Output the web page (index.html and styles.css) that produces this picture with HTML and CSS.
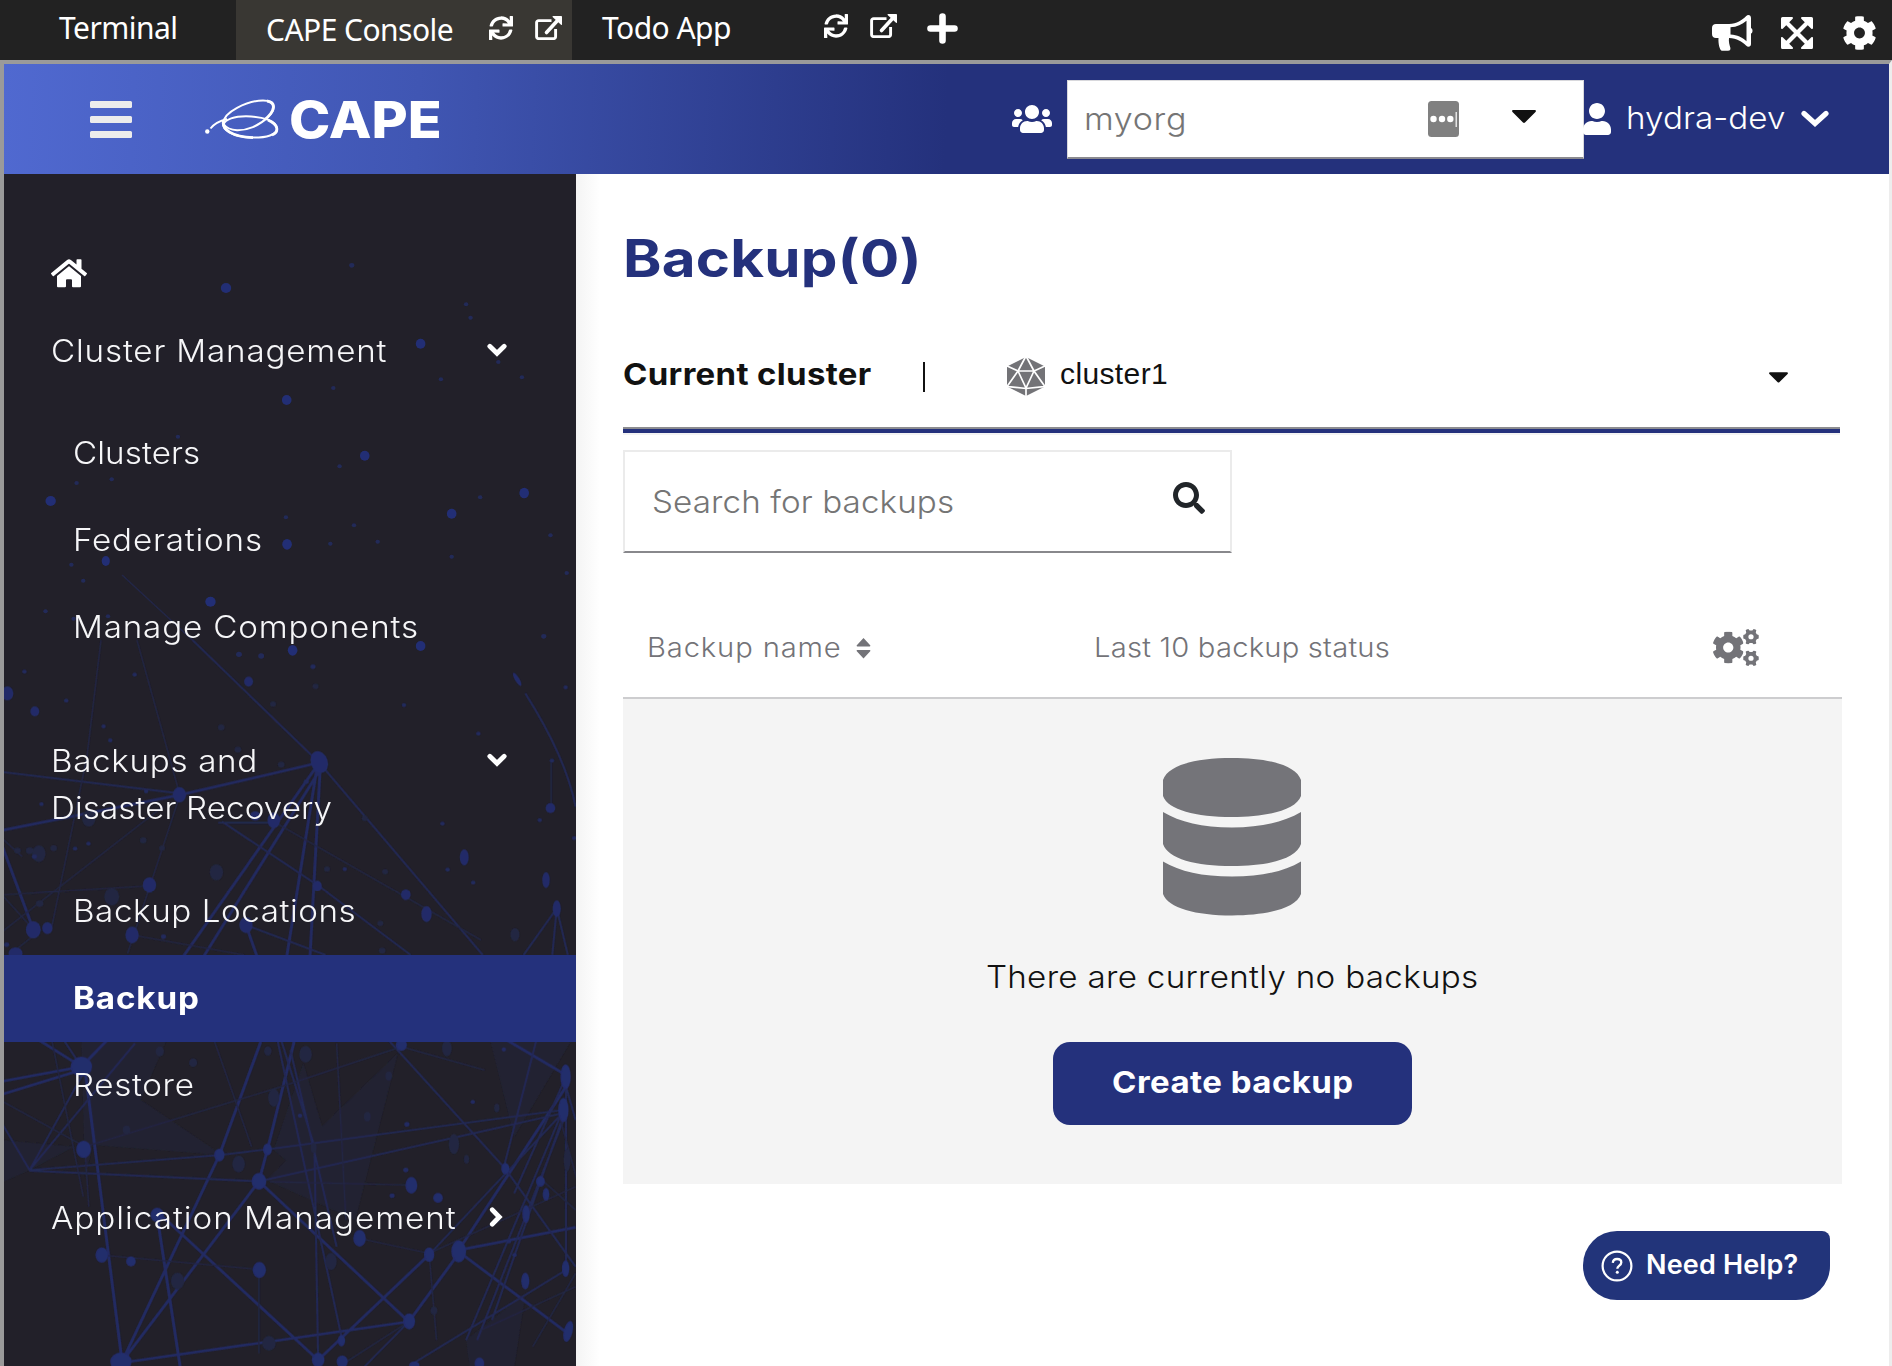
FILE: index.html
```html
<!DOCTYPE html>
<html lang="en">
<head>
<meta charset="utf-8">
<title>CAPE Console</title>
<link rel="stylesheet" href="styles.css">
</head>
<body>
<svg class="defs" aria-hidden="true">
  <symbol id="sync" viewBox="0 0 512 512"><path d="M440.65 12.57l4 82.77A247.16 247.16 0 0 0 255.83 8C134.73 8 33.91 94.92 12.29 209.82A12 12 0 0 0 24.09 224h49.05a12 12 0 0 0 11.67-9.26 175.91 175.91 0 0 1 317-56.94l-101.46-4.86a12 12 0 0 0-12.57 12v47.41a12 12 0 0 0 12 12H500a12 12 0 0 0 12-12V12a12 12 0 0 0-12-12h-47.37a12 12 0 0 0-11.98 12.57zM255.83 432a175.61 175.61 0 0 1-146-77.8l101.8 4.87a12 12 0 0 0 12.57-12v-47.4a12 12 0 0 0-12-12H12a12 12 0 0 0-12 12V500a12 12 0 0 0 12 12h47.35a12 12 0 0 0 12-12.6l-4.15-82.57A247.17 247.17 0 0 0 255.83 504c121.11 0 221.93-86.92 243.55-201.82a12 12 0 0 0-11.8-14.18h-49.05a12 12 0 0 0-11.67 9.26A175.86 175.86 0 0 1 255.83 432z"/></symbol>
  <symbol id="external" viewBox="0 0 27 24"><path d="M16.5 4.6H3.6a2 2 0 0 0-2 2v14a2 2 0 0 0 2 2h15a2 2 0 0 0 2-2V13" fill="none" stroke="currentColor" stroke-width="2.9"/><path d="M11.5 16.5L23 4" stroke="currentColor" stroke-width="3.6" stroke-linecap="round"/><path d="M18 0h8.2a.8.8 0 0 1 .8.8V8.400a.6.6 0 0 1-1 .4L17.600 1a.6.6 0 0 1 .4-1z"/></symbol>
  <symbol id="cog" viewBox="18 6 476 500"><path d="M487.4 315.7l-42.6-24.6c4.3-23.2 4.3-47 0-70.2l42.6-24.6c4.9-2.8 7.1-8.6 5.5-14-11.1-35.6-30-67.8-54.7-94.6-3.8-4.1-10-5.1-14.8-2.3L380.8 110c-17.900-15.400-38.500-27.300-60.800-35.100V25.800c0-5.600-3.900-10.500-9.400-11.700-36.700-8.200-74.300-7.800-109.200 0-5.500 1.200-9.400 6.100-9.400 11.700V75c-22.200 7.900-42.800 19.800-60.800 35.100L88.700 85.500c-4.900-2.800-11-1.900-14.800 2.300-24.700 26.700-43.600 58.900-54.700 94.600-1.700 5.400.6 11.200 5.500 14L67.300 221c-4.300 23.200-4.300 47 0 70.200l-42.600 24.600c-4.900 2.800-7.100 8.600-5.500 14 11.100 35.600 30 67.800 54.700 94.600 3.800 4.100 10 5.100 14.800 2.300l42.600-24.600c17.900 15.400 38.500 27.300 60.800 35.100v49.200c0 5.600 3.900 10.500 9.400 11.700 36.700 8.200 74.300 7.800 109.200 0 5.500-1.200 9.400-6.100 9.400-11.700v-49.200c22.200-7.900 42.800-19.800 60.800-35.100l42.600 24.600c4.900 2.800 11 1.900 14.800-2.300 24.700-26.700 43.600-58.900 54.700-94.600 1.500-5.500-.7-11.300-5.600-14.100zM256 336c-44.100 0-80-35.900-80-80s35.900-80 80-80 80 35.900 80 80-35.900 80-80 80z"/></symbol>
  <symbol id="cog-small" viewBox="0 0 16 16"><path fill-rule="evenodd" d="M3.500.6l1.800-.6 1.300 1.600h2.800L10.700 0l1.800.6 1 .8-.6 2.200 1 1.900 2 .6.100 1.900-.1 1.900-2 .6-1 1.900.6 2.200-1 .8-1.800.6-1.300-1.600H6.600L5.300 16l-1.800-.6-1-.8.600-2.200-1-1.900-2-.6L0 8l.1-1.900 2-.6 1-1.900-.6-2.200zM8 5.300a2.700 2.700 0 1 0 0 5.400 2.700 2.700 0 0 0 0-5.400z"/></symbol>
  <symbol id="chev" viewBox="0 0 28 17"><path d="M3 3.500l11 10 11-10" fill="none" stroke="currentColor" stroke-width="5.200" stroke-linecap="round" stroke-linejoin="miter"/></symbol>
  <symbol id="chev-bold" viewBox="0 0 20 14"><path d="M2.800 3.300l7.200 7 7.200-7" fill="none" stroke="currentColor" stroke-width="4.800" stroke-linecap="round" stroke-linejoin="miter"/></symbol>
</svg>

<header class="tabs">
  <div class="tab tab-terminal"><span>Terminal</span></div>
  <div class="tab tab-active"><span>CAPE Console</span>
    <svg class="i-sync"><use href="#sync"/></svg><svg class="i-ext"><use href="#external"/></svg></div>
  <div class="tab tab-todo"><span>Todo App</span>
    <svg class="i-sync"><use href="#sync"/></svg><svg class="i-ext"><use href="#external"/></svg></div>
  <svg class="i-plus" viewBox="0 0 31 31"><path d="M15.500 3.500v24M3.500 15.500h24" stroke="currentColor" stroke-width="6.600" stroke-linecap="round"/></svg>
  <div class="tools">
    <svg class="i-horn" viewBox="0 0 41 36"><path fill-rule="evenodd" d="M4 9h13c8 0 13-4 17-7.700C36-.8 39 0 39 3v10c2 .6 2 5 0 5.600V29c0 3-3 3.500-5 1.500-4-4-9-7-17-7.500-.5 4 .5 7 1.300 9.500.5 2-.3 3.300-2.300 3.300H10C8 35.800 6 29 6.500 23H4c-2.500 0-4-1.500-4-4v-6c0-2.500 1.500-4 4-4zM18.500 12.300v7.300c7 .4 11.500 3 16 6.600V5.800c-4.500 3.800-9.500 6.200-16 6.500z"/></svg>
    <svg class="i-expand" viewBox="0 0 32 32"><path d="M5 5l22 22M27 5L5 27" stroke="currentColor" stroke-width="4.200"/><path d="M1.500 0h9.500a1 1 0 0 1 .7 1.700L1.700 11.700A1 1 0 0 1 0 11V1.500A1.500 1.500 0 0 1 1.500 0zM30.500 0H21a1 1 0 0 0-.7 1.700l10 10A1 1 0 0 0 32 11V1.500A1.500 1.500 0 0 0 30.500 0zM1.500 32h9.500a1 1 0 0 0 .7-1.700l-10-10A1 1 0 0 0 0 21v9.500A1.500 1.500 0 0 0 1.500 32zM30.500 32H21a1 1 0 0 1-.7-1.700l10-10A1 1 0 0 1 32 21v9.500a1.500 1.500 0 0 1-1.500 1.500z"/></svg>
    <svg class="i-cog"><use href="#cog"/></svg>
  </div>
</header>

<div class="frame">
  <div class="appbar">
    <div class="menu"><i></i><i></i><i></i></div>
    <svg class="logo" viewBox="0 0 74 40"><path d="M5.500 29.500C9 25 14 22 22 20" stroke-width="1.900"/><path d="M18.500 26C16 13 44 1.500 58 1.400 71 1.500 71.500 10 63 18 54 27 42 31.500 32 31.300 26 31 21 28.500 18.500 25" stroke-width="2"/><path d="M18.200 26C20 20 30 17.300 41 17.300 58 17.500 71.800 22 72 29.500 72 36 61 38.600 49 38.600 32 38.500 19 33 18.200 26" stroke-width="2"/><path d="M18.500 22C16.500 30 27 38 48 38.600M62 2C71.500 3.500 70 12 60 20.500M63 21C74 26 74 33 67 36" stroke-width="2.800"/><circle cx="2.300" cy="32.500" r="2.200" fill="#fff" stroke="none"/></svg>
    <strong class="brand">CAPE</strong>
    <svg class="i-users" viewBox="0 32 640 448"><path d="M96 224c35.300 0 64-28.700 64-64s-28.700-64-64-64-64 28.700-64 64 28.700 64 64 64zm448 0c35.300 0 64-28.700 64-64s-28.700-64-64-64-64 28.700-64 64 28.700 64 64 64zm32 32h-64c-17.600 0-33.500 7.100-45.100 18.600 40.300 22.100 68.900 62 75.100 109.400h66c17.700 0 32-14.300 32-32v-32c0-35.300-28.700-64-64-64zm-256 0c61.900 0 112-50.100 112-112S381.900 32 320 32 208 82.100 208 144s50.100 112 112 112zm76.800 32h-8.300c-20.800 10-43.900 16-68.500 16s-47.600-6-68.500-16h-8.300C179.600 288 128 339.600 128 403.200V432c0 26.500 21.500 48 48 48h288c26.500 0 48-21.500 48-48v-28.800c0-63.600-51.600-115.200-115.200-115.200zm-223.700-13.400C161.500 263.100 145.600 256 128 256H64c-35.300 0-64 28.700-64 64v32c0 17.700 14.300 32 32 32h65.900c6.300-47.400 34.900-87.300 75.200-109.400z"/></svg>
    <div class="org">
      <span>myorg</span>
      <svg class="i-key" viewBox="0 0 31 36"><rect width="31" height="36" rx="3.500" fill="#808080"/><g fill="#fff"><circle cx="5.500" cy="18" r="3.200"/><circle cx="14" cy="18" r="3.200"/><circle cx="22.300" cy="18" r="3.200"/><path d="M27.600 11h1.200v15h-1.200z"/></g></svg>
      <svg class="i-caret" viewBox="0 0 24 13"><path d="M1.300 0h21.400c1.200 0 1.600 1.200.8 2L13 12.500c-.6.600-1.400.6-2 0L.5 2C-.3 1.200.1 0 1.300 0z"/></svg>
    </div>
    <svg class="i-user" viewBox="0 0 448 512"><path d="M224 256c70.700 0 128-57.300 128-128S294.700 0 224 0 96 57.300 96 128s57.300 128 128 128zm89.600 32h-16.700c-22.200 10.200-46.900 16-72.900 16s-50.600-5.800-72.900-16h-16.700C60.200 288 0 348.200 0 422.400V464c0 26.500 21.500 48 48 48h352c26.500 0 48-21.500 48-48v-41.600c0-74.200-60.200-134.400-134.400-134.400z"/></svg>
    <span class="user">hydra-dev</span>
    <svg class="i-down"><use href="#chev"/></svg>
  </div>

  <div class="body">
    <nav class="side">
      <svg class="net" width="572" height="1192" viewBox="4 174 572 1192">
        <defs><filter id="soft" x="-5%" y="-5%" width="110%" height="110%"><feGaussianBlur stdDeviation=".7"/></filter></defs>
        <g filter="url(#soft)">
        <g transform="translate(0 180) scale(.36992 .33333)">
          <g fill="#232e74"><ellipse cx="611" cy="324" rx="14" ry="15"/><ellipse cx="1137" cy="491" rx="13" ry="15"/><ellipse cx="775" cy="660" rx="13" ry="15"/><ellipse cx="986" cy="827" rx="13" ry="15"/><ellipse cx="137" cy="963" rx="14" ry="15"/><ellipse cx="1417" cy="939" rx="13" ry="16"/><ellipse cx="1221" cy="1001" rx="13" ry="15"/><ellipse cx="776" cy="1093" rx="13" ry="16"/><ellipse cx="286" cy="1143" rx="11" ry="15"/><ellipse cx="569" cy="1265" rx="14" ry="15"/><ellipse cx="1137" cy="1398" rx="13" ry="15"/><ellipse cx="791" cy="1411" rx="13" ry="16"/></g>
          <g fill="#222a58"><circle cx="951" cy="256" r="7"/><circle cx="1260" cy="373" r="6"/><circle cx="1272" cy="413" r="6"/><circle cx="1347" cy="546" r="6"/><circle cx="1192" cy="598" r="6"/><circle cx="1411" cy="592" r="6"/><circle cx="901" cy="624" r="6"/><circle cx="481" cy="770" r="6"/><circle cx="918" cy="859" r="6"/><circle cx="302" cy="898" r="6"/><circle cx="207" cy="909" r="6"/><circle cx="1298" cy="952" r="6"/><circle cx="773" cy="1012" r="6"/><circle cx="957" cy="1036" r="6"/><circle cx="1021" cy="1085" r="6"/><circle cx="893" cy="1091" r="6"/><circle cx="1488" cy="1066" r="6"/><circle cx="1221" cy="1130" r="6"/><circle cx="193" cy="1154" r="6"/><circle cx="1532" cy="1179" r="6"/><circle cx="225" cy="1202" r="6"/><circle cx="123" cy="1294" r="6"/><circle cx="199" cy="1316" r="6"/><circle cx="292" cy="1309" r="6"/><circle cx="1470" cy="1369" r="7"/><circle cx="706" cy="1428" r="8"/><circle cx="646" cy="1423" r="8"/></g>
          <path d="M330 1185L520 1380" stroke="#222647" stroke-width="4"/>
        </g>
        <g transform="translate(0 640) scale(.36992 .33333)">
          <g fill="none" stroke="#232a60" stroke-width="8"><path d="M0 572L485 465 863 368M863 368L495 950M870 380L550 950M866 375L838 950M858 375L775 950M0 600L90 868M665 855L695 950"/></g>
          <g fill="none" stroke="#222955" stroke-width="5.500"><path d="M520 0L863 368 1305 945M0 395L485 460M600 545L858 735 1110 945M590 548H740M665 855L880 945M1505 805L1415 945M1505 805L1493 945M1505 805L1535 945M1420 160C1500 300 1540 410 1556 500"/></g>
          <g fill="none" stroke="#222644" stroke-width="4"><path d="M273 0L235 350 140 860M370 0L485 460M440 500L0 880M485 470L345 940M0 765L400 738M110 870L30 940M357 885L660 945M740 545L1300 900M0 590L60 650M10 770L90 868M1490 360V500"/></g>
          <g fill="#232c68"><ellipse cx="863" cy="366" rx="23" ry="33" transform="rotate(-15 863 366)"/><ellipse cx="485" cy="464" rx="18" ry="23"/><ellipse cx="20" cy="160" rx="16" ry="21"/><ellipse cx="94" cy="214" rx="12" ry="15"/><ellipse cx="672" cy="125" rx="12" ry="15"/><ellipse cx="740" cy="541" rx="17" ry="23"/><ellipse cx="404" cy="735" rx="18" ry="23"/><ellipse cx="90" cy="869" rx="20" ry="26"/><ellipse cx="128" cy="864" rx="14" ry="18"/><ellipse cx="357" cy="885" rx="18" ry="25"/><ellipse cx="42" cy="940" rx="19" ry="18"/><ellipse cx="665" cy="855" rx="18" ry="24"/><ellipse cx="858" cy="738" rx="12" ry="16"/><ellipse cx="1097" cy="764" rx="13" ry="16"/><ellipse cx="1153" cy="822" rx="14" ry="24"/><ellipse cx="1255" cy="652" rx="12" ry="24"/><ellipse cx="1488" cy="504" rx="13" ry="15"/><ellipse cx="1476" cy="720" rx="10" ry="24"/><ellipse cx="1505" cy="806" rx="11" ry="25"/><ellipse cx="1398" cy="118" rx="6" ry="22" transform="rotate(-28 1398 118)"/><ellipse cx="690" cy="528" rx="14" ry="14"/></g>
          <g fill="#222742"><ellipse cx="105" cy="641" rx="18" ry="25"/><ellipse cx="302" cy="770" rx="20" ry="26"/><ellipse cx="585" cy="697" rx="18" ry="24"/><ellipse cx="240" cy="535" rx="18" ry="25"/><ellipse cx="1392" cy="884" rx="12" ry="20"/><circle cx="145" cy="624" r="9"/><circle cx="80" cy="632" r="10"/><circle cx="47" cy="632" r="9"/><circle cx="387" cy="601" r="9"/><circle cx="438" cy="624" r="8"/><circle cx="598" cy="262" r="9"/><circle cx="643" cy="329" r="9"/><circle cx="738" cy="192" r="8"/><circle cx="760" cy="374" r="9"/><circle cx="853" cy="139" r="8"/><circle cx="884" cy="687" r="8"/><circle cx="986" cy="535" r="8"/><circle cx="1041" cy="695" r="8"/><circle cx="1028" cy="850" r="8"/><circle cx="1033" cy="932" r="9"/><circle cx="107" cy="791" r="10"/></g>
          <g fill="#222a5c"><circle cx="66" cy="95" r="6"/><circle cx="364" cy="104" r="6"/><circle cx="179" cy="182" r="6"/><circle cx="280" cy="259" r="6"/><circle cx="298" cy="301" r="6"/><circle cx="846" cy="80" r="7"/><circle cx="1092" cy="195" r="6"/><circle cx="1293" cy="281" r="6"/><circle cx="1529" cy="142" r="6"/><circle cx="1492" cy="362" r="6"/><circle cx="1459" cy="540" r="6"/><circle cx="1196" cy="551" r="6"/><circle cx="1210" cy="689" r="6"/><circle cx="1279" cy="728" r="6"/><circle cx="932" cy="687" r="6"/><circle cx="112" cy="492" r="6"/><circle cx="395" cy="454" r="6"/><circle cx="828" cy="425" r="7"/><circle cx="239" cy="611" r="6"/><circle cx="203" cy="626" r="6"/><circle cx="93" cy="650" r="7"/><circle cx="442" cy="890" r="7"/><circle cx="18" cy="914" r="7"/><circle cx="1552" cy="594" r="6"/></g>
        </g>
        <g transform="translate(0 1020) scale(.36992 .33333)">
          <g fill="#222333"><path d="M220 60h230l-70 180 220 165-350-30-20 100zM0 360l200 20L80 450 0 490zM1075 100L720 480 960 600zM820 130L740 390 940 580zM1325 60h220L1390 350zM1260 960l160-140-30 220h-120z"/></g>
          <g fill="none" stroke="#232b63" stroke-width="8"><path d="M0 185L220 140 105 60M0 225L220 150M220 140L290 60M230 150L330 1025M705 65L593 405 330 1025M795 65L723 388 700 484 330 1025M700 484L1105 905M430 580L860 1020M425 590L487 1040M330 1028L1105 905M860 1020L1160 704M1240 695L1535 940M1240 690L1556 622M1370 60L1530 165M1105 905L1240 700M1240 690L1530 200"/></g>
          <g fill="none" stroke="#222955" stroke-width="5.500"><path d="M175 65L220 140M365 70L80 450 0 300M80 450L225 160M80 450L593 405 723 388 1520 270M80 452L700 484 1520 280M750 60L925 960M785 90L910 680M1450 60L1360 450M1050 60L1365 445 1556 740M1530 170L1390 520M1520 275L1260 960M1530 200L1556 300M1530 200V760M1110 1035L1530 750M1530 280L1410 620 1290 960M1525 280L1330 900M1105 905L985 1040M1160 704L1520 280M760 60L850 380 860 1020"/></g>
          <g fill="none" stroke="#222644" stroke-width="4"><path d="M580 65L680 380M910 70L935 600M0 240L230 380 760 200 1085 80 1310 150M230 390L240 560M275 705L700 748V1000M1160 700L1556 500M970 655L1160 700 1180 960M1105 905L930 1030M1556 800L1300 930M1470 485L1556 570M1556 760L1440 980M1510 280L1560 480M730 485L1110 495M140 60L225 530"/></g>
          <g fill="#232d6c"><ellipse cx="220" cy="140" rx="29" ry="30"/><ellipse cx="226" cy="388" rx="20" ry="26"/><ellipse cx="593" cy="405" rx="14" ry="19"/><ellipse cx="723" cy="388" rx="12" ry="18"/><ellipse cx="700" cy="484" rx="20" ry="25"/><ellipse cx="275" cy="705" rx="17" ry="23"/><ellipse cx="354" cy="724" rx="13" ry="15"/><ellipse cx="425" cy="585" rx="18" ry="22"/><ellipse cx="701" cy="750" rx="18" ry="24"/><ellipse cx="327" cy="1025" rx="29" ry="28"/><ellipse cx="860" cy="1020" rx="17" ry="22"/><ellipse cx="923" cy="962" rx="10" ry="17"/><ellipse cx="925" cy="1025" rx="15" ry="19"/><ellipse cx="1106" cy="904" rx="16" ry="24"/><ellipse cx="1240" cy="694" rx="20" ry="33"/><ellipse cx="1160" cy="704" rx="14" ry="22"/><ellipse cx="972" cy="655" rx="17" ry="25"/><ellipse cx="1112" cy="496" rx="16" ry="25"/><ellipse cx="1184" cy="534" rx="13" ry="15"/><ellipse cx="1085" cy="75" rx="15" ry="18"/><ellipse cx="1366" cy="446" rx="11" ry="17"/><ellipse cx="1461" cy="484" rx="12" ry="16"/><ellipse cx="1476" cy="523" rx="9" ry="19"/><ellipse cx="1529" cy="170" rx="14" ry="37"/><ellipse cx="1523" cy="270" rx="14" ry="36"/><ellipse cx="1529" cy="746" rx="10" ry="25"/><ellipse cx="1422" cy="582" rx="10" ry="27"/><ellipse cx="1420" cy="783" rx="11" ry="25"/><ellipse cx="1536" cy="934" rx="12" ry="32" transform="rotate(12 1536 934)"/><ellipse cx="1296" cy="1030" rx="13" ry="18"/><ellipse cx="1120" cy="1036" rx="14" ry="12"/></g>
          <g fill="#222742"><ellipse cx="432" cy="94" rx="11" ry="15"/><ellipse cx="522" cy="128" rx="11" ry="13"/><ellipse cx="724" cy="93" rx="10" ry="14"/><ellipse cx="826" cy="103" rx="17" ry="25"/><ellipse cx="1208" cy="85" rx="13" ry="24"/><ellipse cx="1051" cy="168" rx="9" ry="14"/><ellipse cx="993" cy="290" rx="9" ry="14"/><ellipse cx="342" cy="330" rx="10" ry="13"/><ellipse cx="740" cy="233" rx="15" ry="27"/><ellipse cx="645" cy="432" rx="17" ry="25"/><ellipse cx="1227" cy="372" rx="14" ry="30"/><ellipse cx="1261" cy="418" rx="7" ry="13"/><ellipse cx="1343" cy="264" rx="7" ry="13"/><ellipse cx="848" cy="384" rx="8" ry="15"/><ellipse cx="480" cy="783" rx="18" ry="25"/><ellipse cx="895" cy="724" rx="15" ry="26"/><ellipse cx="1173" cy="872" rx="9" ry="12"/><ellipse cx="727" cy="970" rx="18" ry="22"/><ellipse cx="1533" cy="420" rx="9" ry="34"/></g>
          <g fill="#222b62"><circle cx="811" cy="287" r="6"/><circle cx="1278" cy="246" r="6"/><circle cx="1100" cy="313" r="7"/><circle cx="1097" cy="450" r="7"/><circle cx="1060" cy="527" r="7"/><circle cx="1362" cy="88" r="6"/><circle cx="1391" cy="705" r="6"/><circle cx="1376" cy="664" r="6"/></g>
        </g>
        </g>
      </svg>
      <svg class="i-home" viewBox="0 32 576 448"><path d="M280.370 148.260L96 300.110V464a16 16 0 0 0 16 16l112.060-.29a16 16 0 0 0 15.920-16V368a16 16 0 0 1 16-16h64a16 16 0 0 1 16 16v95.640a16 16 0 0 0 16 16.050L464 480a16 16 0 0 0 16-16V300L295.670 148.260a12.190 12.190 0 0 0-15.300 0zM571.600 251.470L488 182.560V44.050a12 12 0 0 0-12-12h-56a12 12 0 0 0-12 12v72.610L318.470 43a48 48 0 0 0-61 0L4.340 251.470a12 12 0 0 0-1.600 16.900l25.500 31A12 12 0 0 0 45.150 301l235.220-193.740a12.190 12.190 0 0 1 15.300 0L530.900 301a12 12 0 0 0 16.900-1.600l25.500-31a12 12 0 0 0-1.700-16.930z"/></svg>
      <div class="group"><span class="t sp-1">Cluster Management</span><svg class="i-chev"><use href="#chev-bold"/></svg></div>
      <ul class="list first">
        <li><span class="t sp-2">Clusters</span></li>
        <li><span class="t sp-1">Federations</span></li>
        <li><span class="t sp-1">Manage Components</span></li>
      </ul>
      <div class="group backups"><span class="t"><span class="sp-3">Backups and</span><br><span class="sp-2">Disaster Recovery</span></span><svg class="i-chev"><use href="#chev-bold"/></svg></div>
      <ul class="list second">
        <li><span class="t sp-4">Backup Locations</span></li>
        <li class="on"><span class="t">Backup</span></li>
        <li><span class="t sp-3">Restore</span></li>
      </ul>
      <div class="group apps"><span class="t sp-5">Application Management</span><svg class="i-chev right"><use href="#chev-bold"/></svg></div>
    </nav>

    <main class="main">
      <h1><span>Backup(0)</span></h1>
      <div class="cluster">
        <strong>Current cluster</strong><i class="sep"></i>
        <svg class="i-dice" viewBox="0 0 38 39"><path fill="#737377" d="M19 0l19 9.500v20L19 39 0 29.500v-20z"/><path d="M19-1L11 14h16L19-1M11 14l8 17 8-17M-1 8.500L11 14-1 31M39 8.500L27 14l12 17M-1 29.300l20 2.200 20-2.200M19 31v9" fill="none" stroke="#fff" stroke-width="1.700"/></svg>
        <span class="name">cluster1</span>
        <svg class="i-caret" viewBox="0 0 24 13"><path d="M1.300 0h21.400c1.200 0 1.600 1.200.8 2L13 12.500c-.6.600-1.400.6-2 0L.5 2C-.3 1.200.1 0 1.300 0z"/></svg>
      </div>
      <div class="search"><span>Search for backups</span>
        <svg class="i-search" viewBox="0 0 512 512"><path d="M505 442.700L405.300 343c-4.500-4.500-10.600-7-17-7H372c27.600-35.300 44-79.700 44-128C416 93.100 322.900 0 208 0S0 93.100 0 208s93.100 208 208 208c48.300 0 92.700-16.400 128-44v16.300c0 6.400 2.500 12.500 7 17l99.700 99.700c9.400 9.400 24.600 9.400 33.900 0l28.300-28.300c9.400-9.400 9.400-24.600.1-34zM208 336c-70.700 0-128-57.200-128-128 0-70.700 57.200-128 128-128 70.700 0 128 57.200 128 128 0 70.700-57.200 128-128 128z"/></svg></div>
      <div class="thead">
        <span class="c1">Backup name</span>
        <svg class="i-sort" viewBox="0 0 15 20"><path d="M7.500 0l6.700 7.300c.4.500.1 1.200-.5 1.200H1.300C.7 8.500.4 7.800.8 7.300zM7.500 20.500l6.700-7.300c.4-.5.1-1.200-.5-1.200H1.300c-.6 0-.9.700-.5 1.200z"/></svg>
        <span class="c2">Last 10 backup status</span>
        <svg class="i-cogs" viewBox="0 0 46 37"><use href="#cog" x="0" y="2.500" width="30.500" height="32"/><use href="#cog-small" x="30" y="0" width="16" height="15.500"/><use href="#cog-small" x="30" y="21.500" width="16" height="15.500"/></svg>
      </div>
      <section class="empty">
        <svg class="i-db" viewBox="0 0 138 157"><path d="M0 22C5 7 33 0 69 0s64 7 69 22v16c-5 14-33 21-69 21S5 52 0 38zM0 54c17 10 39 15.500 69 15.500S121 64 138 54v32c-5 15-33 22-69 22S5 101 0 86zM0 103.500c17 10 39 15 69 15s52-5 69-15V136c-5 14-33 21.500-69 21.500S5 150 0 136z"/></svg>
        <p><span>There are currently no backups</span></p>
        <button><span>Create backup</span></button>
      </section>
    </main>
  </div>
</div>
<div class="help"><svg viewBox="0 0 32 32"><circle cx="16" cy="16" r="14.400" fill="none" stroke="currentColor" stroke-width="2.200"/><path d="M11.800 12.800c.2-2.500 2-3.800 4.300-3.800 2.400 0 4.200 1.400 4.200 3.500 0 3-4 3.200-4 6.200" fill="none" stroke="currentColor" stroke-width="2.300"/><circle cx="16.300" cy="22.200" r="1.500" fill="currentColor"/></svg><span>Need Help?</span></div>
</body>
</html>
```
FILE: styles.css
```css
* { box-sizing: border-box; }
body {
  margin: 0;
  width: 1892px;
  height: 1366px;
  overflow: hidden;
  position: relative;
  background: #fff;
  font-family: Inter, sans-serif;
  font-weight: 300;
  white-space: nowrap;
}
svg { display: block; flex: none; fill: currentColor; overflow: visible; }
.defs { position: absolute; width: 0; height: 0; }

/* IDE tab strip */
.tabs {
  display: flex;
  height: 60px;
  background: #222;
  color: #fff;
  font: 400 30px/55px "Noto Sans", sans-serif;
  letter-spacing: -.54px;
}
.tab { display: flex; flex: none; }
.tab > span { flex: none; }
.tab-terminal { width: 236px; padding-left: 59px; }
.tab-active { width: 336px; padding-left: 30px; background: #393733; line-height: 59px; }
.tab-active > span { width: 223px; }
.tab-todo { width: 355px; padding-left: 30px; }
.tab-todo > span { width: 222px; }
.i-sync { width: 24px; height: 24px; margin-top: 14px; }
.i-ext { width: 27px; height: 24px; margin: 14px 0 0 22px; }
.tab-active svg { margin-top: 16px; }
.i-plus { width: 31px; height: 31px; margin-top: 13px; }
.tools { display: flex; margin-left: auto; padding-right: 16px; }
.i-horn { width: 41px; height: 36px; margin-top: 15px; }
.i-expand { width: 32px; height: 32px; margin: 17px 30px 0 28px; }
.i-cog { width: 33px; height: 34px; margin-top: 16px; }

.frame {
  height: 1306px;
  border: solid #9a9a9a;
  border-width: 4px 3px 0 4px;
  border-right-color: #ededed;
}

/* application header */
.appbar {
  display: flex;
  height: 110px;
  padding-left: 86px;
  color: #fff;
  background: linear-gradient(92deg, #5069d0 0, #4056b3 22%, #24317c 50%);
}
.menu { display: flex; flex-direction: column; gap: 8px; width: 42px; margin-top: 37px; flex: none; }
.menu i { height: 7px; border-radius: 1.500px; background: #ececec; }
.logo { width: 74px; height: 40px; margin: 35px 0 0 73px; fill: none; stroke: #fff; }
.brand {
  width: 150px;
  margin-left: 10px;
  font-size: 51.500px;
  font-weight: 800;
  line-height: 110px;
  transform: scaleX(1.08);
  transform-origin: 0 50%;
}
.i-users { width: 40px; height: 28px; margin: 41px 0 0 573px; }
.org {
  display: flex;
  flex: none;
  width: 517px;
  height: 79px;
  margin: 16px 0 0 15px;
  padding-left: 16px;
  background: #fff;
  border: 1px solid #d8d8dc;
  border-bottom: 2px solid #8a8a8f;
  color: #757575;
}
.org span {
  width: 344px;
  font-size: 31px;
  line-height: 76px;
  letter-spacing: .57px;
  transform: scaleX(1.1);
  transform-origin: 0 50%;
}
.i-key { width: 31px; height: 36px; margin-top: 20px; }
.i-caret { width: 24px; height: 13px; margin: 29px 0 0 53px; color: #111; }
.i-user { width: 28px; height: 32px; margin: 39px 0 0 -1px; }
.user {
  width: 175px;
  margin-left: 15px;
  font-size: 31px;
  line-height: 108px;
  letter-spacing: .05px;
  transform: scaleX(1.07);
  transform-origin: 0 50%;
}
.i-down { width: 28px; height: 17px; margin-top: 46px; }

.body { display: flex; height: 1192px; }

/* sidebar */
.side {
  position: relative;
  flex: none;
  width: 572px;
  background: #222029;
  color: #f6f6f8;
  font-size: 31px;
  line-height: 47px;
}
.side > * { position: relative; }
.side > .net { position: absolute; left: 0; top: 0; overflow: hidden; }
.i-home { width: 36px; height: 28.500px; margin: 84.500px 0 0 47px; color: #fff; }
.group { display: flex; justify-content: space-between; margin-top: 40px; padding: 0 69px 0 47px; }
.t { display: block; transform: scaleX(1.07); transform-origin: 0 50%; }
.sp-1 { letter-spacing: .78px; }
.sp-2 { letter-spacing: .09px; }
.sp-3 { letter-spacing: .63px; }
.sp-4 { letter-spacing: .54px; }
.sp-5 { letter-spacing: .94px; }
.i-chev { width: 20px; height: 14px; margin-top: 16px; color: #fff; }
.i-chev.right { transform: rotate(-90deg); margin: 16px 1px 0 0; }
.list { list-style: none; margin: 0; padding: 0; line-height: 87px; }
.list li { height: 87px; padding-left: 69px; }
.first { margin-top: 35px; }
.group.backups { margin-top: 67px; }
.second { margin-top: 37px; line-height: 85px; }
.list .on { background: #24317c; color: #fff; font-weight: 700; letter-spacing: .8px; }
.group.apps { margin-top: 65px; }

/* main column */
.main {
  flex: 1;
  padding: 49px 47px 0 47px;
  background: linear-gradient(90deg, #f4f4f4 0, #fff 24px);
}
h1 {
  margin: 0;
  color: #24317c;
  font-size: 52px;
  font-weight: 700;
  line-height: 71px;
  height: 70px;
  letter-spacing: .2px;
}
h1 span { display: inline-block; transform: scaleX(1.12); transform-origin: 0 50%; }
.cluster {
  display: flex;
  align-items: center;
  width: 1217px;
  height: 140px;
  padding-top: 26px;
  border-bottom: 4px solid #24317c;
  box-shadow: inset 0 -2px #8c8c90, 0 2px #f3f3f3;
  color: #111;
}
.cluster strong {
  width: 300px;
  font-size: 30px;
  font-weight: 700;
  letter-spacing: .3px;
  transform: scaleX(1.1);
  transform-origin: 0 50%;
}
.sep { width: 2px; height: 30px; margin-top: 5px; background: #111; }
.i-dice { width: 38px; height: 39px; margin: 4px 15px 0 82px; }
.name { font: 400 30px "Liberation Sans", sans-serif; letter-spacing: .38px; }
.cluster .i-caret { width: 19px; height: 11px; margin: 6px 52px 0 auto; }
.search {
  display: flex;
  justify-content: space-between;
  width: 609px;
  height: 103px;
  margin-top: 17px;
  padding: 0 25px 0 27px;
  border: 2px solid #ebebeb;
  border-bottom-color: #88888c;
  background: #fff;
  color: #757575;
  font-size: 31px;
  line-height: 100px;
  letter-spacing: .1px;
}
.search span { transform: scaleX(1.07); transform-origin: 0 50%; }
.i-search { width: 32px; height: 32px; margin-top: 30px; color: #212529; }
.thead {
  display: flex;
  height: 101px;
  margin-top: 45px;
  padding-left: 24px;
  border-bottom: 2px solid #cdcdcf;
  color: #737378;
  font-size: 27px;
  line-height: 99px;
}
.thead span { transform: scaleX(1.08); transform-origin: 0 50%; }
.c1 { width: 209px; letter-spacing: .8px; }
.i-sort { width: 15px; height: 20px; margin-top: 40px; }
.c2 { width: 619px; margin-left: 223px; letter-spacing: .2px; }
.i-cogs { width: 46px; height: 37px; margin-top: 31px; }
.empty {
  display: flex;
  flex-direction: column;
  align-items: center;
  height: 485px;
  padding-top: 59px;
  background: #f4f4f4;
}
.i-db { width: 138px; height: 157px; margin-right: 1px; color: #747479; }
.empty p { margin: 38px 0 0; color: #111; font-size: 31px; line-height: 48px; height: 47px; letter-spacing: .28px; }
.empty p span { display: inline-block; transform: scaleX(1.07); }
.empty button {
  width: 359px;
  height: 83px;
  margin-top: 42px;
  padding: 0 0 3px;
  border: 0;
  border-radius: 17px;
  background: #24317c;
  color: #fff;
  font: 700 30px Inter, sans-serif;
  letter-spacing: .42px;
}
.empty button span { display: inline-block; transform: scaleX(1.1); }

/* floating help button */
.help {
  position: absolute;
  left: 1583px;
  top: 1231px;
  display: flex;
  align-items: center;
  gap: 13px;
  width: 247px;
  height: 69px;
  padding-left: 18px;
  border-radius: 34px 8px 34px 34px;
  background: #22347a;
  color: #fff;
  font-size: 27px;
  font-weight: 600;
  letter-spacing: .16px;
}
.help svg { width: 32px; height: 32px; }
.help span { line-height: 66px; padding-bottom: 2px; }
```
